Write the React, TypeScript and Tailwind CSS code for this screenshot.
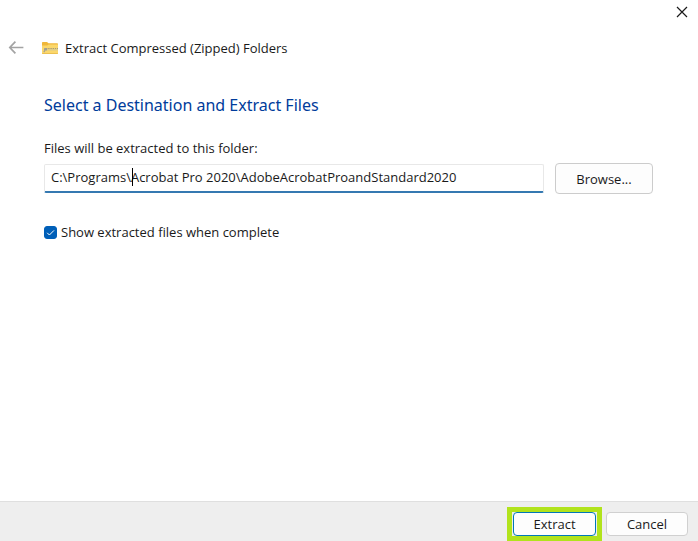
import { useState } from 'react';

const BackArrow = () => (
    <svg width="16" height="14" viewBox="0 0 16 14" fill="none" stroke="#a3a3a3" strokeWidth="1.7">
        <path d="M15.4 6.5H2M7.4 .7L1.8 6.5L7.4 12.3" />
    </svg>
);

const CloseIcon = () => (
    <svg width="12" height="12" viewBox="0 0 12 12" fill="none" stroke="#1a1a1a" strokeWidth="1.2">
        <path d="M1 1L11 11M11 1L1 11" />
    </svg>
);

const ZipFolderIcon = () => (
    <svg width="16" height="13" viewBox="0 0 16 13">
        <path d="M0 .8Q0 0 .8 0H5L6.5 1.2H15.2Q16 1.2 16 2V6H0Z" fill="#f0b73a" />
        <path d="M0 3.4H5.2L6.6 2.4H16V11.2Q16 12 15.2 12H.8Q0 12 0 11.2Z" fill="#fbd76b" />
        <path d="M0 11H16V11.2Q16 12 15.2 12H.8Q0 12 0 11.2Z" fill="#ecc050" />
        <path d="M4 6.5H16" stroke="#a59c78" strokeWidth="1" strokeDasharray="1.4 .8" />
        <path d="M4 7.8H16" stroke="#dccb8c" strokeWidth="1.4" />
        <rect x="2" y="6" width="3" height="2.6" rx=".6" fill="#a09f94" />
        <path d="M3 8.4L1.8 10.2" stroke="#a09f94" strokeWidth="1.2" />
    </svg>
);

const App = () => {
    const [path, setPath] = useState('C:\\Programs\\Acrobat Pro 2020\\AdobeAcrobatProandStandard2020');
    const [showFiles, setShowFiles] = useState(true);

    return (
        <div className="flex flex-col min-h-screen bg-white text-[13px] leading-5 text-[#1a1a1a] font-['Open_Sans','Noto_Sans',sans-serif]">
            <div className="flex justify-end pt-1.5 pr-2.5">
                <button type="button" aria-label="Close"><CloseIcon /></button>
            </div>

            <header className="flex items-center pt-5 pl-2">
                <button type="button" aria-label="Back"><BackArrow /></button>
                <div className="flex items-center gap-[7px] ml-[18px]">
                    <ZipFolderIcon />
                    <span>Extract Compressed (Zipped) Folders</span>
                </div>
            </header>

            <main className="flex-1 pl-11 pr-[45px] pt-[35px]">
                <h1 className="text-base leading-6 text-[#003c9b] font-['Noto_Sans','Open_Sans',sans-serif]">Select a Destination and Extract Files</h1>

                <label htmlFor="destination" className="block mt-[21px]">Files will be extracted to this folder:</label>
                <div className="flex items-center gap-[11px] mt-[5px]">
                    <div className="relative flex-1">
                        <input
                            id="destination"
                            type="text"
                            value={path}
                            onChange={(event) => setPath(event.target.value)}
                            className="block w-full h-[29px] px-1.5 pb-0.5 bg-white border border-[#e8e8e8] border-b-2 border-b-[#3579b1] rounded-xs focus:outline-none"
                        />
                        {/* text cursor */}
                        <span className="absolute left-[88px] top-1 w-px h-[18px] bg-black" />
                    </div>
                    <button type="button" className="w-[98px] h-[31px] bg-[#fdfdfd] border border-[#cccccc] rounded-sm">Browse...</button>
                </div>

                <label className="flex items-center gap-1 mt-7">
                    <span className="relative">
                        <input
                            type="checkbox"
                            checked={showFiles}
                            onChange={(event) => setShowFiles(event.target.checked)}
                            className="peer block appearance-none size-[13px] border border-[#8a8a8a] rounded-[3px] checked:bg-[#005fb8] checked:border-[#005fb8]"
                        />
                        <svg className="absolute inset-0 hidden peer-checked:block pointer-events-none" width="13" height="13" viewBox="0 0 13 13" fill="none" stroke="#ffffff" strokeWidth="1">
                            <path d="M3.2 6.8L5.4 9L10 4.4" />
                        </svg>
                    </span>
                    Show extracted files when complete
                </label>
            </main>

            <footer className="flex justify-end items-center gap-1 pt-[5px] pr-2.5 bg-[#eeeeee] border-t border-[#dfdfdf]">
                <div className="px-px border-[5px] border-[#b1e31c]">
                    <button type="button" className="block w-[83px] h-6 bg-[#fdfdfd] border border-[#0078b8] rounded-sm">Extract</button>
                </div>
                <button type="button" className="w-[82px] h-6 bg-[#fdfdfd] border border-[#d0d0d0] rounded-sm">Cancel</button>
            </footer>
        </div>
    );
};

export default App;
